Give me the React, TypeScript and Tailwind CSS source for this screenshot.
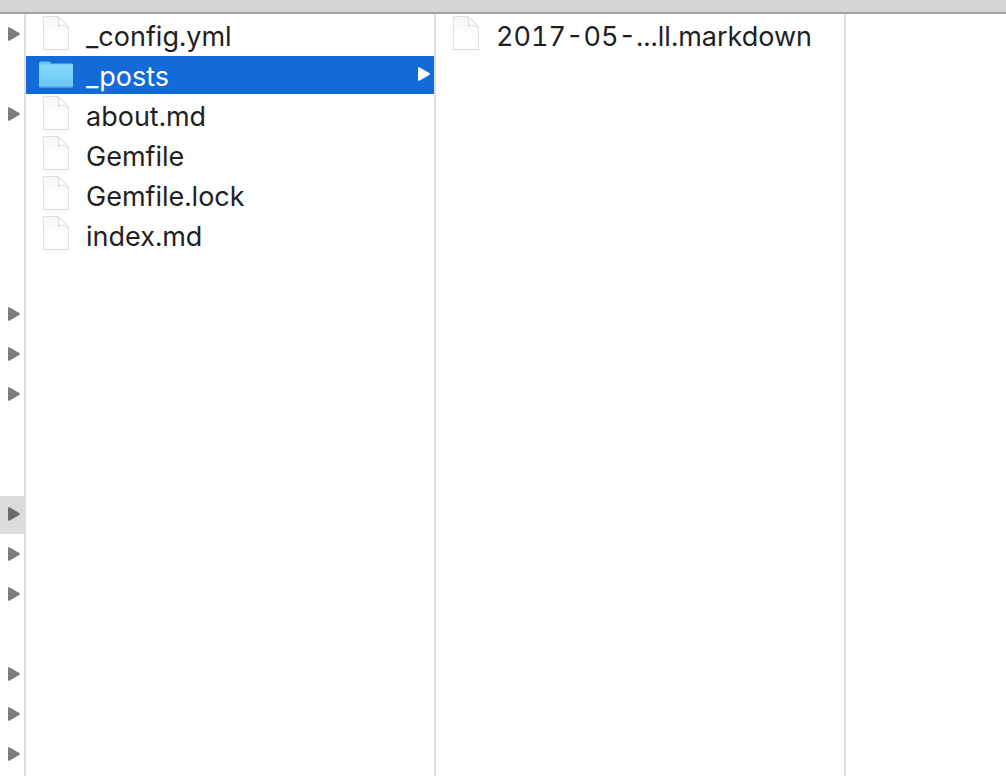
type Entry = { name: string; kind: "file" | "folder"; selected?: boolean };

const entries: Entry[] = [
  { name: "_config.yml", kind: "file" },
  { name: "_posts", kind: "folder", selected: true },
  { name: "about.md", kind: "file" },
  { name: "Gemfile", kind: "file" },
  { name: "Gemfile.lock", kind: "file" },
  { name: "index.md", kind: "file" },
];

const posts: Entry[] = [{ name: "2017-05-...ll.markdown", kind: "file" }];

// Parent column: which rows hold a folder, and which one is open.
const parentRowCount = 19;
const parentFolders = [0, 2, 7, 8, 9, 12, 13, 14, 16, 17, 18];
const openParent = 12;

function Arrow({ className }: { className: string }) {
  return (
    <svg className={className} width="12" height="14" viewBox="0 0 12 14" aria-hidden="true">
      <path
        d="M0 1.3C0 .3.8-.1 1.8.4L11.2 6.1C12.1 6.6 12.1 7.3 11.2 7.9L1.8 13.6C.8 14.1 0 13.7 0 12.7Z"
        fill="currentColor"
      />
    </svg>
  );
}

function FileIcon() {
  return (
    <svg width="34" height="36" viewBox="0 0 34 36" aria-hidden="true">
      <defs>
        <linearGradient id="paper" x1="0" y1="0" x2="0" y2="1">
          <stop offset="0" stopColor="#f6f6f6" />
          <stop offset="0.55" stopColor="#fdfdfd" />
          <stop offset="1" stopColor="#ffffff" />
        </linearGradient>
        <linearGradient id="fold" x1="0" y1="1" x2="1" y2="0">
          <stop offset="0" stopColor="#d8d8d8" />
          <stop offset="0.35" stopColor="#ffffff" />
          <stop offset="1" stopColor="#f0f0f0" />
        </linearGradient>
      </defs>
      <path d="M4.5 .5H18C20.5 .8 28.8 9 29.5 12V33.5H4.5Z" fill="url(#paper)" stroke="#e2e2e2" />
      <path d="M4 33.7H30" stroke="#d9d9d9" />
      <path
        d="M18 .5C19.8 2.6 20.3 5.4 19.4 9.8C23.8 8.9 27.6 9.6 29.5 12C28.8 9 20.5 .8 18 .5Z"
        fill="url(#fold)"
        stroke="#d4d4d4"
        strokeWidth="0.8"
      />
    </svg>
  );
}

function FolderIcon() {
  return (
    <svg width="34" height="36" viewBox="0 0 34 36" aria-hidden="true">
      <defs>
        <linearGradient id="folder" x1="0" y1="0" x2="0" y2="1">
          <stop offset="0" stopColor="#83d8fa" />
          <stop offset="1" stopColor="#69c7f1" />
        </linearGradient>
      </defs>
      <path
        d="M0 9V7Q0 5.5 1.5 5.5H9.5Q10.7 5.5 11.5 6.5L12.5 7.5H32.5Q34 7.5 34 9V12H0Z"
        fill="#67c5ed"
      />
      <path d="M0 9H34V30Q34 31.5 32.5 31.5H1.5Q0 31.5 0 30Z" fill="url(#folder)" />
      <path d="M0 9H34" stroke="#8bdafa" />
      <path d="M.5 30.8H33.5" stroke="#50aada" />
    </svg>
  );
}

function Column({ label, items }: { label: string; items: Entry[] }) {
  return (
    <section aria-label={label} className="w-[410px] shrink-0 border-r-2 border-[#dedede] pt-0.5">
      <ul className="flex flex-col gap-0.5">
        {items.map((item) => (
          <li key={item.name}>
            <button
              type="button"
              className={`flex h-[38px] w-full items-center pr-1 pl-[13px] text-left ${
                item.selected ? "bg-[#126bd6] text-white" : "text-[#1f1f1f]"
              }`}
            >
              <span className="h-[38px] shrink-0">
                {item.kind === "folder" ? <FolderIcon /> : <FileIcon />}
              </span>
              <span className="ml-[13px] pt-1 text-[27px] leading-9 whitespace-nowrap tabular-nums">
                {item.name}
              </span>
              {item.kind === "folder" && <Arrow className="mb-0.5 ml-auto text-white" />}
            </button>
          </li>
        ))}
      </ul>
    </section>
  );
}

export default function App() {
  return (
    <div className="flex min-h-screen flex-col overflow-hidden bg-white font-['Inter',sans-serif]">
      <header className="h-3.5 shrink-0 border-b-2 border-[#a5a3a6] bg-[#d7d5d8]" />
      <main className="flex grow">
        <nav aria-label="Parent folder" className="w-[26px] shrink-0 border-r-2 border-[#dedede] pt-0.5">
          <ul className="flex flex-col gap-0.5">
            {Array.from({ length: parentRowCount }, (_, row) => (
              <li key={row} className={`h-[38px] ${row === openParent ? "bg-[#dcdcdc]" : ""}`}>
                {parentFolders.includes(row) && (
                  <button
                    type="button"
                    aria-label="Open folder"
                    className="flex h-9 w-full items-center pl-2"
                  >
                    <Arrow className={row === openParent ? "text-[#6b6b6b]" : "text-[#7d7d7d]"} />
                  </button>
                )}
              </li>
            ))}
          </ul>
        </nav>
        <Column label="Site files" items={entries} />
        <Column label="Posts" items={posts} />
        <section aria-label="Preview" className="min-w-0 grow" />
      </main>
    </div>
  );
}
